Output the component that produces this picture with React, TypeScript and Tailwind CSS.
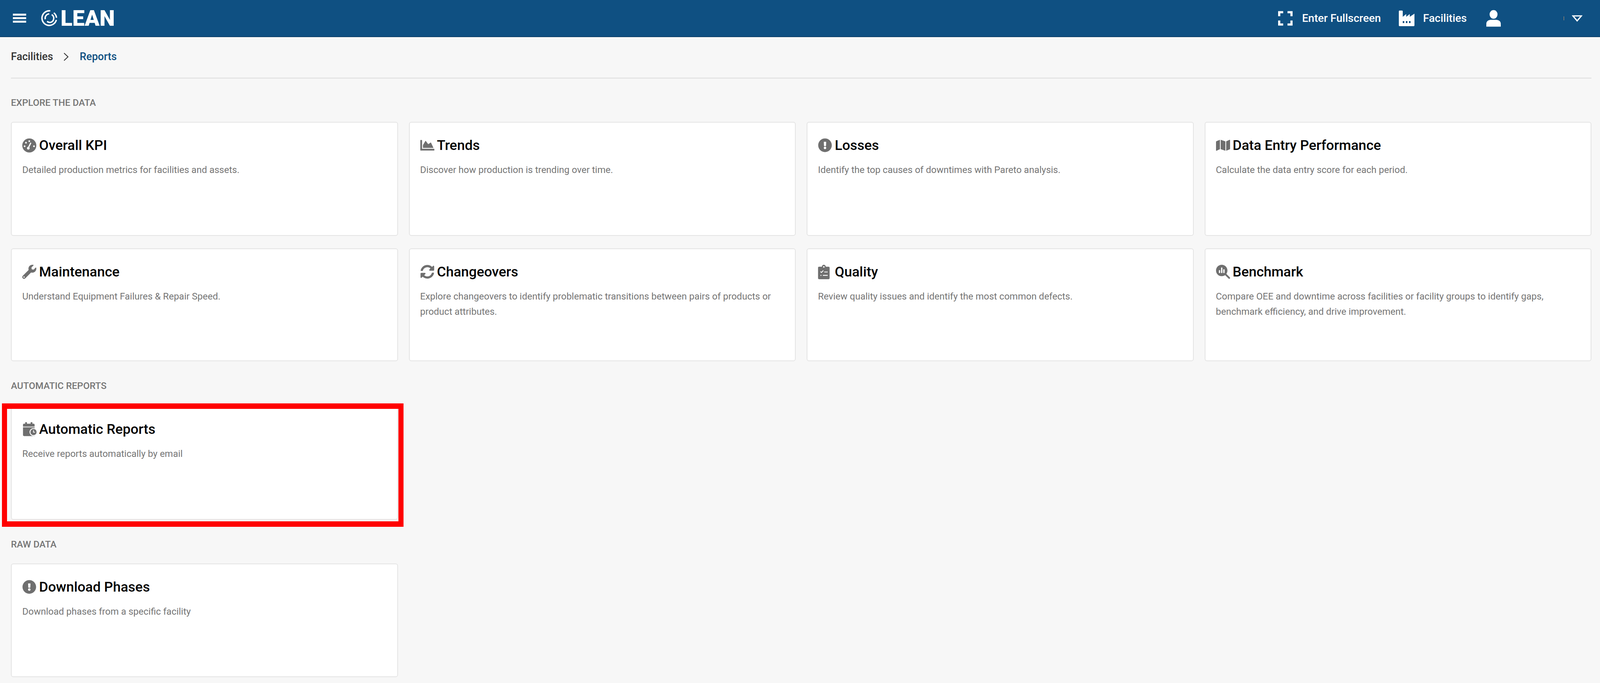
import React from 'react';
import {
  FaChartArea,
  FaExclamationCircle,
  FaMap,
  FaSyncAlt,
  FaWrench,
} from 'react-icons/fa';
import { FaMagnifyingGlassChart } from 'react-icons/fa6';

type CardProps = {
  icon: React.ReactNode;
  title: string;
  text: string;
};

const GaugeIcon = () => (
  <svg viewBox="0 0 36 36" className="h-[37px] w-[36px]">
    <circle cx="18" cy="18" r="18" className="fill-[#6f6f6f]" />
    <circle cx="18" cy="7" r="2.2" fill="#fff" />
    <circle cx="9.5" cy="11" r="2.2" fill="#fff" />
    <circle cx="6" cy="20" r="2.2" fill="#fff" />
    <circle cx="30" cy="20" r="2.2" fill="#fff" />
    <path d="M15 25l7-14" stroke="#fff" strokeWidth="3" fill="none" />
    <circle cx="15.5" cy="25" r="3.4" fill="#fff" />
  </svg>
);

const ClipboardIcon = () => (
  <svg viewBox="0 0 24 30" className="h-[37px] w-[30px] fill-[#6f6f6f]">
    <path d="M2 4h6a4 4 0 0 1 8 0h6a2 2 0 0 1 2 2v22a2 2 0 0 1-2 2H2a2 2 0 0 1-2-2V6a2 2 0 0 1 2-2z" />
    <circle cx="12" cy="4.5" r="1.6" fill="#fff" />
    <path d="M5 14l2 2 4-4" fill="none" stroke="#fff" strokeWidth="1.6" />
    <path d="M13 15h7M5 22h2M10 22h10" fill="none" stroke="#fff" strokeWidth="1.8" />
  </svg>
);

const CalendarClockIcon = () => (
  <svg viewBox="0 0 42 38" className="h-[38px] w-[39px]">
    <path
      className="fill-[#6f6f6f]"
      d="M8 0h5v4h10V0h5v4h3a3 3 0 0 1 3 3v5H2V7a3 3 0 0 1 3-3h3zM2 14h32v24H5a3 3 0 0 1-3-3z"
    />
    <circle cx="31" cy="27" r="11" fill="#fff" />
    <circle cx="31" cy="27" r="8.5" className="fill-[#6f6f6f]" />
    <path d="M31 22v5.5h4" fill="none" stroke="#fff" strokeWidth="2" />
  </svg>
);

const LeanLogo = () => (
  <svg viewBox="0 0 46 46" className="h-[43px] w-[42px]" fill="none" stroke="#fff">
    <path d="M26 2.5A20.5 20.5 0 1 0 43 28" strokeWidth="4" />
    <path d="M36 8a20.5 20.5 0 0 1 7.5 14" strokeWidth="4" />
    <path d="M23 11a12 12 0 0 0-11 15" strokeWidth="4" />
    <path d="M30 13a12 12 0 0 1-4 22 12 12 0 0 1-9-3" strokeWidth="4" />
  </svg>
);

const Card = ({ icon, title, text }: CardProps) => (
  <div className="h-full rounded-[6px] border-2 border-[#e4e4e4] bg-white pl-[27px] pr-[25px] pt-[38px]">
    <div className="flex h-[40px] items-center">
      <div className="flex w-[43px] shrink-0 items-center text-[36px] text-[#6f6f6f]">{icon}</div>
      <h3 className="text-[35.5px] font-medium leading-[40px] text-black">{title}</h3>
    </div>
    <p className="mt-[24px] text-[24px] leading-[39px] text-[#757575]">{text}</p>
  </div>
);

const SectionLabel = ({ children }: { children: React.ReactNode }) => (
  <h2 className="h-[30px] text-[24px] font-medium leading-[30px] text-[#757575]">{children}</h2>
);

const App: React.FC = () => {
  return (
    <div className="min-h-screen w-full overflow-hidden bg-[#f7f7f7] font-['Roboto',sans-serif]">
      {/* Top bar */}
      <header className="flex h-[95px] items-center border-b-2 border-[#0a3f69] bg-[#0f5082] pl-[33px] pr-[45px] text-white">
        <div className="flex h-[23px] w-[34px] flex-col justify-between">
          <div className="h-[5px] bg-white"></div>
          <div className="h-[5px] bg-white"></div>
          <div className="h-[5px] bg-white"></div>
        </div>
        <div className="ml-[38px] flex items-center gap-[8px]">
          <LeanLogo />
          <span className="text-[56px] font-black leading-[58px]">LEAN</span>
        </div>

        <div className="ml-auto flex items-center">
          <svg viewBox="0 0 40 40" className="h-[40px] w-[37px]" fill="none" stroke="#fff" strokeWidth="6">
            <path d="M3 14V3h11M26 3h11v11M37 26v11H26M14 37H3V26" />
          </svg>
          <span className="ml-[24px] text-[28px] font-medium">Enter Fullscreen</span>
          <svg viewBox="0 0 40 40" className="ml-[45px] h-[40px] w-[42px] fill-white">
            <path d="M0 2a2 2 0 0 1 2-2h6a2 2 0 0 1 2 2v14l9-7v7l9-7v7l12-8v30a2 2 0 0 1-2 2H2a2 2 0 0 1-2-2z" />
            <path d="M10 27h4v5h-4zM18 27h4v5h-4zM26 27h4v5h-4z" fill="#0f5082" />
          </svg>
          <span className="ml-[21px] text-[28px] font-medium">Facilities</span>
          <svg viewBox="0 0 40 46" className="ml-[50px] h-[46px] w-[37px] fill-white">
            <ellipse cx="20" cy="12" rx="11" ry="12" />
            <path d="M0 46V38C0 31 6 27 13 27h14c7 0 13 4 13 11v8z" />
          </svg>
          <div className="ml-[161px] h-[10px] w-[1px] bg-[#c9956a]"></div>
          <svg viewBox="0 0 30 20" className="ml-[20px] h-[20px] w-[27px]" fill="none" stroke="#fff" strokeWidth="3.5">
            <path d="M3 3h24L15 17z" />
          </svg>
        </div>
      </header>

      <main className="pl-[28px] pr-[22px]">
        {/* Breadcrumb */}
        <nav className="flex h-[106px] items-center border-b-2 border-[#dddddd] pb-[4px] text-[27px] font-medium">
          <span className="text-[#333333]">Facilities</span>
          <svg viewBox="0 0 14 21" className="ml-[26px] h-[21px] w-[14px]" fill="none" stroke="#333333" strokeWidth="2.2">
            <path d="M2 1l10 9.5L2 20" />
          </svg>
          <span className="ml-[28px] text-[#0f5082]">Reports</span>
        </nav>

        <section className="mt-[47px]">
          <SectionLabel>EXPLORE THE DATA</SectionLabel>
          <div className="mt-[34px] grid grid-cols-4 gap-x-[28px] gap-y-[32px]">
            <div className="h-[292px]">
              <Card icon={<GaugeIcon />} title="Overall KPI" text="Detailed production metrics for facilities and assets." />
            </div>
            <div className="h-[292px]">
              <Card icon={<FaChartArea />} title="Trends" text="Discover how production is trending over time." />
            </div>
            <div className="h-[292px]">
              <Card icon={<FaExclamationCircle />} title="Losses" text="Identify the top causes of downtimes with Pareto analysis." />
            </div>
            <div className="h-[292px]">
              <Card icon={<FaMap />} title="Data Entry Performance" text="Calculate the data entry score for each period." />
            </div>
            <div className="h-[289px]">
              <Card icon={<FaWrench />} title="Maintenance" text="Understand Equipment Failures & Repair Speed." />
            </div>
            <div className="h-[289px]">
              <Card
                icon={<FaSyncAlt />}
                title="Changeovers"
                text="Explore changeovers to identify problematic transitions between pairs of products or product attributes."
              />
            </div>
            <div className="h-[289px]">
              <Card icon={<ClipboardIcon />} title="Quality" text="Review quality issues and identify the most common defects." />
            </div>
            <div className="h-[289px]">
              <Card
                icon={<FaMagnifyingGlassChart />}
                title="Benchmark"
                text="Compare OEE and downtime across facilities or facility groups to identify gaps, benchmark efficiency, and drive improvement."
              />
            </div>
          </div>
        </section>

        <section className="mt-[48px]">
          <SectionLabel>AUTOMATIC REPORTS</SectionLabel>
          <div className="mt-[36px] grid grid-cols-4 gap-x-[28px]">
            <div className="relative h-[292px]">
              <Card icon={<CalendarClockIcon />} title="Automatic Reports" text="Receive reports automatically by email" />
              {/* Highlight drawn over the card */}
              <div className="absolute bottom-[-18px] left-[-23px] right-[-14px] top-[-6px] border-x-[13px] border-y-[14px] border-[#ff0000]"></div>
            </div>
          </div>
        </section>

        <section className="mt-[48px]">
          <SectionLabel>RAW DATA</SectionLabel>
          <div className="mt-[34px] grid grid-cols-4 gap-x-[28px]">
            <div className="h-[291px]">
              <Card icon={<FaExclamationCircle />} title="Download Phases" text="Download phases from a specific facility" />
            </div>
          </div>
        </section>
      </main>
    </div>
  );
};

export default App;
